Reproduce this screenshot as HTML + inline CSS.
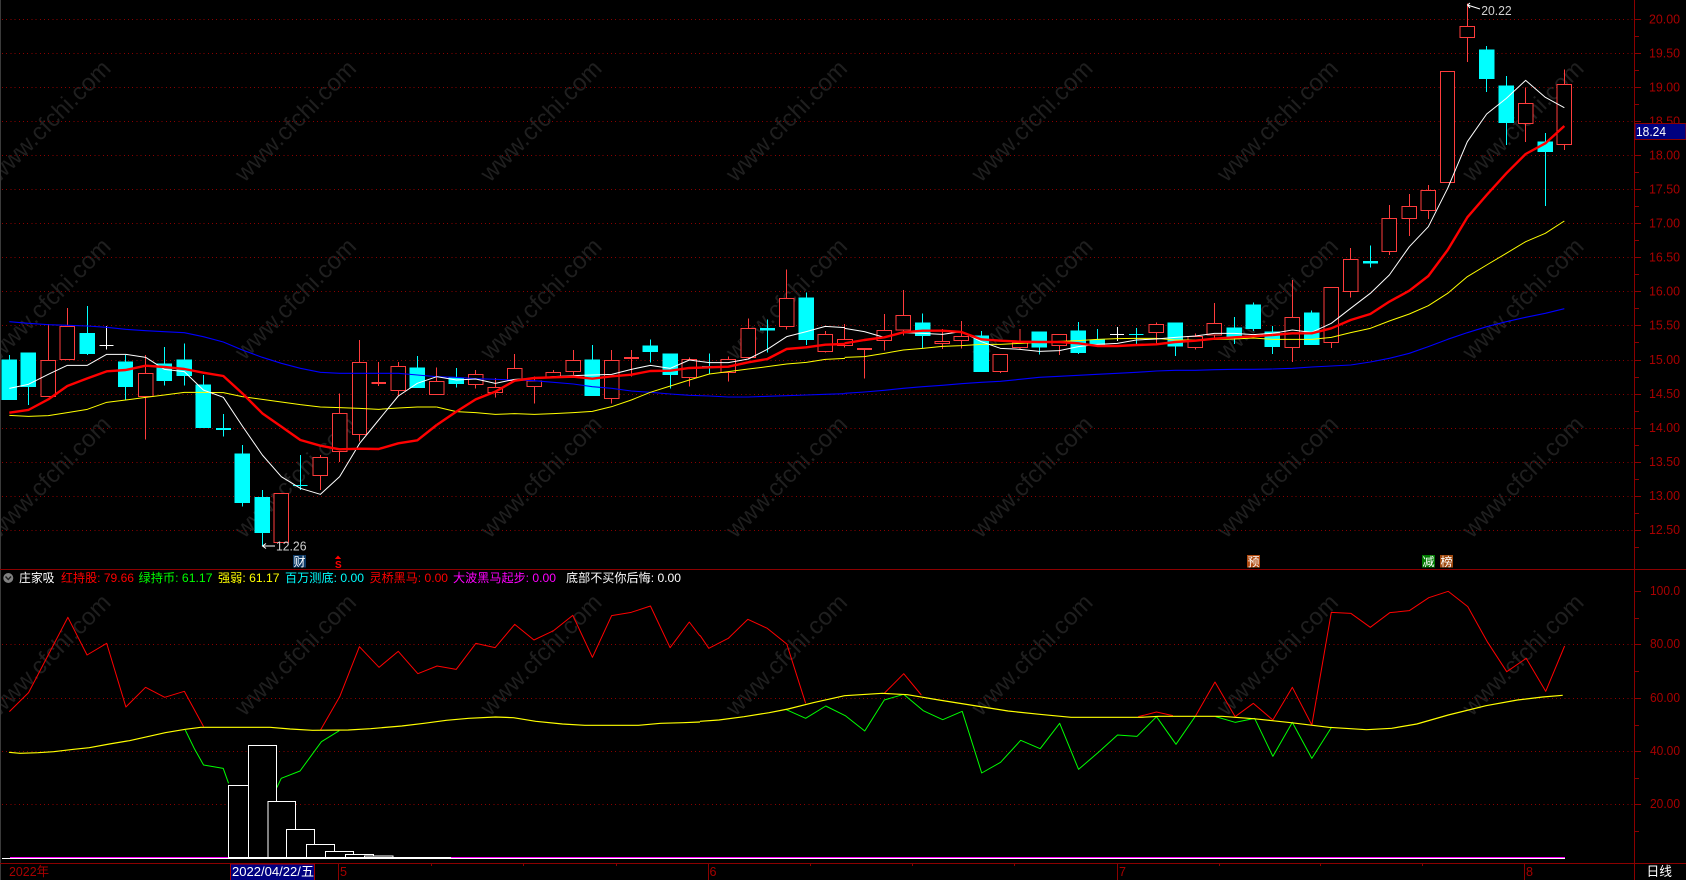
<!DOCTYPE html>
<html>
<head>
<meta charset="utf-8">
<style>
html,body{margin:0;padding:0;background:#000;width:1686px;height:880px;overflow:hidden}
svg{display:block}
text{font-family:"Liberation Sans","Noto Sans CJK SC",sans-serif}
.wm text{font-size:24px;fill:#1f1f1f}
.ax text{font-size:13px;fill:#a80000}
.lg text{font-size:12px}
.nss *{vector-effect:non-scaling-stroke}
.crisp *{shape-rendering:crispEdges}
.r{stroke:#ff3c3c;fill:#000;stroke-width:1}
.c{stroke:#00ffff;fill:#00ffff;stroke-width:1}
.w{stroke:#fff;fill:none;stroke-width:1}
.rf{fill:#ff3c3c}
.cf{fill:#00ffff}
.l{fill:none;stroke-linejoin:round}
</style>
</head>
<body>
<svg width="1686" height="880" viewBox="0 0 1686 880" xmlns="http://www.w3.org/2000/svg">
<rect width="1686" height="880" fill="#000"/>

<g class="wm" transform="translate(7 6)">
<text transform="translate(-8 177) rotate(-45)" textLength="160">www.cfchi.com</text>
<text transform="translate(237.5 177) rotate(-45)" textLength="160">www.cfchi.com</text>
<text transform="translate(483 177) rotate(-45)" textLength="160">www.cfchi.com</text>
<text transform="translate(728.5 177) rotate(-45)" textLength="160">www.cfchi.com</text>
<text transform="translate(974 177) rotate(-45)" textLength="160">www.cfchi.com</text>
<text transform="translate(1219.5 177) rotate(-45)" textLength="160">www.cfchi.com</text>
<text transform="translate(1465 177) rotate(-45)" textLength="160">www.cfchi.com</text>
<text transform="translate(-8 355) rotate(-45)" textLength="160">www.cfchi.com</text>
<text transform="translate(237.5 355) rotate(-45)" textLength="160">www.cfchi.com</text>
<text transform="translate(483 355) rotate(-45)" textLength="160">www.cfchi.com</text>
<text transform="translate(728.5 355) rotate(-45)" textLength="160">www.cfchi.com</text>
<text transform="translate(974 355) rotate(-45)" textLength="160">www.cfchi.com</text>
<text transform="translate(1219.5 355) rotate(-45)" textLength="160">www.cfchi.com</text>
<text transform="translate(1465 355) rotate(-45)" textLength="160">www.cfchi.com</text>
<text transform="translate(-8 533) rotate(-45)" textLength="160">www.cfchi.com</text>
<text transform="translate(237.5 533) rotate(-45)" textLength="160">www.cfchi.com</text>
<text transform="translate(483 533) rotate(-45)" textLength="160">www.cfchi.com</text>
<text transform="translate(728.5 533) rotate(-45)" textLength="160">www.cfchi.com</text>
<text transform="translate(974 533) rotate(-45)" textLength="160">www.cfchi.com</text>
<text transform="translate(1219.5 533) rotate(-45)" textLength="160">www.cfchi.com</text>
<text transform="translate(1465 533) rotate(-45)" textLength="160">www.cfchi.com</text>
<text transform="translate(-8 711) rotate(-45)" textLength="160">www.cfchi.com</text>
<text transform="translate(237.5 711) rotate(-45)" textLength="160">www.cfchi.com</text>
<text transform="translate(483 711) rotate(-45)" textLength="160">www.cfchi.com</text>
<text transform="translate(728.5 711) rotate(-45)" textLength="160">www.cfchi.com</text>
<text transform="translate(974 711) rotate(-45)" textLength="160">www.cfchi.com</text>
<text transform="translate(1219.5 711) rotate(-45)" textLength="160">www.cfchi.com</text>
<text transform="translate(1465 711) rotate(-45)" textLength="160">www.cfchi.com</text>
</g>

<!-- grid -->
<path class="grid" shape-rendering="crispEdges" stroke="#8b0000" stroke-width="1" stroke-dasharray="1 3.2" fill="none"
d="M2 19.5H1635M2 53.5H1635M2 87.5H1635M2 121.5H1635M2 155.5H1635M2 189.5H1635M2 223.5H1635M2 257.5H1635M2 291.5H1635M2 325.5H1635M2 360.5H1635M2 394.5H1635M2 428.5H1635M2 462.5H1635M2 496.5H1635M2 530.5H1635M2 644.5H1635M2 698.5H1635M2 751.5H1635M2 804.5H1635"/>

<!-- frame -->
<g shape-rendering="crispEdges" fill="none">
<path stroke="#3a3a3a" d="M0.5 0V880"/>
<path stroke="#8b0000" d="M1634.5 0V880M0 569.5H1686M0 863.5H1686"/>
<path stroke="#8b0000" d="M1635 19.5H1641M1635 53.5H1641M1635 87.5H1641M1635 121.5H1641M1635 155.5H1641M1635 189.5H1641M1635 223.5H1641M1635 257.5H1641M1635 291.5H1641M1635 325.5H1641M1635 360.5H1641M1635 394.5H1641M1635 428.5H1641M1635 462.5H1641M1635 496.5H1641M1635 530.5H1641
M1635 36.5H1639M1635 70.5H1639M1635 104.5H1639M1635 138.5H1639M1635 172.5H1639M1635 206.5H1639M1635 240.5H1639M1635 274.5H1639M1635 308.5H1639M1635 342.5H1639M1635 377.5H1639M1635 411.5H1639M1635 445.5H1639M1635 479.5H1639M1635 513.5H1639M1635 547.5H1639
M1635 591.5H1641M1635 644.5H1641M1635 698.5H1641M1635 751.5H1641M1635 804.5H1641M1635 618.5H1639M1635 671.5H1639M1635 725.5H1639M1635 778.5H1639M1635 831.5H1639"/>
<path stroke="#8b0000" d="M338.5 863V880M708.5 863V880M1117.5 863V880M1524.5 863V880M431.5 863V866M523.5 863V866M616.5 863V866M810.5 863V866M912.5 863V866M1014.5 863V866M1219.5 863V866M1320.5 863V866M1422.5 863V866"/>
</g>

<!-- axis labels -->
<g class="ax" transform="translate(0 -1)">
<text x="1649" y="24.5" textLength="31" lengthAdjust="spacingAndGlyphs">20.00</text>
<text x="1649" y="58.5" textLength="31" lengthAdjust="spacingAndGlyphs">19.50</text>
<text x="1649" y="92.5" textLength="31" lengthAdjust="spacingAndGlyphs">19.00</text>
<text x="1649" y="126.5" textLength="31" lengthAdjust="spacingAndGlyphs">18.50</text>
<text x="1649" y="160.5" textLength="31" lengthAdjust="spacingAndGlyphs">18.00</text>
<text x="1649" y="194.5" textLength="31" lengthAdjust="spacingAndGlyphs">17.50</text>
<text x="1649" y="228.5" textLength="31" lengthAdjust="spacingAndGlyphs">17.00</text>
<text x="1649" y="262.5" textLength="31" lengthAdjust="spacingAndGlyphs">16.50</text>
<text x="1649" y="296.5" textLength="31" lengthAdjust="spacingAndGlyphs">16.00</text>
<text x="1649" y="330.5" textLength="31" lengthAdjust="spacingAndGlyphs">15.50</text>
<text x="1649" y="365" textLength="31" lengthAdjust="spacingAndGlyphs">15.00</text>
<text x="1649" y="399" textLength="31" lengthAdjust="spacingAndGlyphs">14.50</text>
<text x="1649" y="433" textLength="31" lengthAdjust="spacingAndGlyphs">14.00</text>
<text x="1649" y="467" textLength="31" lengthAdjust="spacingAndGlyphs">13.50</text>
<text x="1649" y="501" textLength="31" lengthAdjust="spacingAndGlyphs">13.00</text>
<text x="1649" y="535" textLength="31" lengthAdjust="spacingAndGlyphs">12.50</text>
<text x="1650" y="596" textLength="30" lengthAdjust="spacingAndGlyphs">100.0</text>
<text x="1650" y="649" textLength="30" lengthAdjust="spacingAndGlyphs">80.00</text>
<text x="1650" y="703" textLength="30" lengthAdjust="spacingAndGlyphs">60.00</text>
<text x="1650" y="756" textLength="30" lengthAdjust="spacingAndGlyphs">40.00</text>
<text x="1650" y="809" textLength="30" lengthAdjust="spacingAndGlyphs">20.00</text>
</g>
<g class="ax">
<text x="9" y="876" textLength="40" lengthAdjust="spacingAndGlyphs">2022年</text>
<text x="340" y="876" textLength="7" lengthAdjust="spacingAndGlyphs">5</text>
<text x="709.5" y="876" textLength="7" lengthAdjust="spacingAndGlyphs">6</text>
<text x="1119" y="876" textLength="7" lengthAdjust="spacingAndGlyphs">7</text>
<text x="1526" y="876" textLength="7" lengthAdjust="spacingAndGlyphs">8</text>
</g>
<text x="1646.5" y="876" font-size="13" fill="#fff" textLength="25.5" lengthAdjust="spacingAndGlyphs">日线</text>

<!-- price box -->
<rect x="1635" y="123.5" width="51" height="16" fill="#000080" stroke="#8b0000" stroke-width="1" shape-rendering="crispEdges"/>
<text x="1636" y="136" font-size="13" fill="#fff" textLength="30" lengthAdjust="spacingAndGlyphs">18.24</text>

<!-- date box -->
<rect x="230.5" y="864" width="84" height="17" fill="#000080" stroke="#a00000" stroke-width="1" shape-rendering="crispEdges"/>
<text x="232" y="876" font-size="13" fill="#fff" textLength="82" lengthAdjust="spacingAndGlyphs">2022/04/22/五</text>

<!-- candles A -->
<g class="nss crisp" transform="translate(0 280) scale(.33333)">
<path class="r" d="M145 132V241M123 241H167V350H123ZM202 84V139M180 139H224V239H180ZM437 225V280M437 350V479M415 280H459V350H415ZM822 640H866V788H822ZM961 525V532M961 586V630M939 532H983V586H939ZM1019 340V400M1019 514V546M997 400H1041V514H997ZM1079 180V247M1079 463V485M1057 247H1100V463H1057ZM1136 246V318M1195 246V259M1195 331V347M1173 259H1217V331H1173Z"/>
<rect class="rf" x="1114" y="306" width="44" height="6"/>
<path class="c" d="M28 225V240M6 240H50V359H6ZM85 320V375M63 219H107V320H63ZM262 78V160M262 221V225M240 160H284V221H240ZM377 225V246M377 320V360M355 246H398V320H355ZM493 201V252M493 302V317M471 252H515V302H471ZM553 190V240M553 287V317M531 240H575V287H531ZM610 285V315M588 315H632V443H588ZM670 402V470M727 495V522M727 668V680M705 522H749V668H705ZM787 630V652M787 758V798M765 652H809V758H765ZM901 525V630M879 616H923M1252 228V264M1230 264H1274V323H1230Z"/>
<rect class="cf" x="648" y="444" width="45" height="6"/>
<path class="w" d="M320 138V208M298 196H340"/>
</g>
<!-- candles B -->
<g class="nss crisp" transform="translate(420 260) scale(.33333)">
<path class="r" d="M50 322V364M28 364H72V403H28ZM167 330V343M167 374V386M145 343H189V374H145ZM226 354V382M226 398V413M204 382H248V398H204ZM284 282V325M262 325H306V361H262ZM343 349V363M343 380V431M321 363H365V380H321ZM400 330V337M378 337H422V351H378ZM460 270V301M460 335V345M438 301H482V335H438ZM575 270V301M575 415V431M553 301H597V415H553ZM634 270V350M808 292V298M808 352V380M786 298H830V352H786ZM925 290V298M925 338V365M903 298H947V338H903ZM985 175V205M985 293V297M963 205H1007V293H963ZM1100 28V115M1100 199V209M1078 115H1122V199H1078ZM1216 213V223M1216 274V278M1194 223H1238V274H1194Z"/>
<rect class="rf" x="612" y="291" width="45" height="6"/>
<path class="c" d="M109 324V354M109 371V383M87 354H131V371H87ZM517 255V300M495 300H539V407H495ZM691 238V258M691 275V308M669 258H713V275H669ZM751 344V386M729 282H773V344H729ZM868 280V342M846 320H890M1042 178V278M1159 97V114M1159 239V255M1137 114H1181V239H1137Z"/>
<rect class="cf" x="1020" y="204" width="45" height="8"/>
</g>
<!-- candles C -->
<g class="nss crisp" transform="translate(840 260) scale(.33333)">
<path class="r" d="M14 192V238M14 256V263M-8 238H38V256H-8ZM73 267V356M133 162V211M133 241V272M111 211H155V241H111ZM190 90V166M190 210V226M168 166H212V210H168ZM307 207V244M307 251V267M285 244H329V251H285ZM364 183V229M364 241V266M342 229H386V241H342ZM481 335V339M459 283H503V335H459ZM540 207V248M540 263V268M518 248H562V263H518ZM658 222V223M658 257V285M636 223H680V257H636ZM949 188V193M949 218V252M927 193H971V218H927ZM1066 220V229M1066 263V269M1044 229H1088V263H1044ZM1123 129V190M1123 225V234M1101 190H1145V225H1101Z"/>
<rect class="rf" x="51" y="264" width="45" height="6"/>
<path class="c" d="M248 160V189M248 227V265M226 189H270V227H226ZM424 213V228M402 228H446V335H402ZM598 261V284M576 216H620V261H576ZM715 186V213M715 278V282M693 213H737V278H693ZM772 207V240M772 253V255M750 240H794V253H750ZM889 204V253M867 223H911M1006 258V288M984 189H1028V258H984ZM1183 171V204M1183 231V252M1161 204H1205V231H1161ZM1240 127V135M1240 205V213M1218 135H1262V205H1218Z"/>
<path class="w" d="M832 201V243M810 223H852"/>
</g>
<!-- candles D -->
<g class="nss crisp" transform="translate(1260 0) scale(.33333)">
<path class="r" d="M97 840V952M97 1043V1086M75 952H119V1043H75ZM214 1027V1044M192 862H236V1027H192ZM272 744V778M272 874V893M250 778H294V874H250ZM388 615V655M388 754V765M366 655H410V754H366ZM448 582V619M448 655V708M426 619H470V655H426ZM505 555V571M505 631V657M483 571H527V631H483ZM541 214H584V547H541ZM622 10V79M622 112V186M600 79H644V112H600ZM797 263V310M797 370V426M775 310H819V370H775ZM913 209V253M913 433V450M891 253H935V433H891Z"/>
<path class="c" d="M37 978V996M37 1040V1062M15 996H59V1040H15ZM155 932V939M133 939H177V1034H133ZM331 736V803M680 138V150M680 236V276M658 150H702V236H658ZM739 228V258M739 368V435M717 258H761V368H717ZM856 399V426M856 455V618M834 426H878V455H834Z"/>
<rect class="cf" x="309" y="783" width="45" height="8"/>
</g>

<!-- MA lines A -->
<g class="nss" transform="translate(0 280) scale(.33333)">
<polyline class="l" stroke="#0000ff" stroke-width="1.1" points="28,125 85,130 145,134 202,136 262,138 320,142 377,148 437,152 493,155 553,158 610,170 670,186 727,210 787,232 844,250 901,265 961,277 1019,280 1079,280 1136,280 1195,280 1252,285 1310,290"/>
<polyline class="l" stroke="#ffff00" stroke-width="1" points="28,406 85,409 145,407 202,398 262,388 320,367 377,360 437,352 493,345 553,337 610,337 670,338 727,350 787,358 844,366 901,374 961,381 1019,383 1079,385 1136,388 1195,384 1252,381 1310,381"/>
<polyline class="l" stroke="#ffffff" stroke-width="1" points="28,325 85,313 145,283 202,256 262,256 320,223 377,223 437,232 493,268 553,275 610,330 670,352 727,438 787,525 844,590 901,625 961,643 1019,590 1079,490 1136,420 1195,348 1252,310 1310,290"/>
<polyline class="l" stroke="#ff0000" stroke-width="2.4" points="28,398 85,390 145,358 202,318 262,295 320,274 377,270 437,257 493,261 553,267 610,278 670,288 727,340 787,400 844,440 901,480 961,497 1019,508 1079,506 1136,507 1195,490 1252,481 1310,435"/>
</g>
<!-- MA lines B -->
<g class="nss" transform="translate(420 260) scale(.33333)">
<polyline class="l" stroke="#0000ff" stroke-width="1.1" points="50,350 109,352 167,356 226,358 284,360 343,362 400,367 460,372 517,380 575,385 634,393 691,397 751,402 808,406 868,408 925,411 985,411 1042,409 1100,407 1159,405 1216,403 1275,401"/>
<polyline class="l" stroke="#ffff00" stroke-width="1" points="50,441 109,455 167,458 226,463 284,461 343,463 400,461 460,458 517,454 575,440 634,420 691,397 751,378 808,360 868,342 925,335 985,327 1042,320 1100,312 1159,307 1216,298 1275,295"/>
<polyline class="l" stroke="#ffffff" stroke-width="1" points="50,350 109,360 167,357 226,370 284,358 343,355 400,350 460,347 517,345 575,343 634,328 691,316 751,325 808,300 868,308 925,308 985,297 1042,268 1100,230 1159,215 1216,199 1275,203"/>
<polyline class="l" stroke="#ff0000" stroke-width="2.4" points="50,495 109,455 167,418 226,395 284,362 343,354 400,352 460,350 517,356 575,349 634,344 691,333 751,332 808,324 868,322 925,320 985,307 1042,297 1100,267 1159,262 1216,254 1275,252"/>
</g>
<!-- MA lines C -->
<g class="nss" transform="translate(840 260) scale(.33333)">
<polyline class="l" stroke="#0000ff" stroke-width="1.1" points="14,400 73,396 133,391 190,385 248,380 307,376 364,371 424,367 481,364 540,358 598,352 658,349 715,346 772,343 832,340 889,337 949,333 1006,331 1066,331 1123,329 1183,328 1240,328 1297,327"/>
<polyline class="l" stroke="#ffff00" stroke-width="1" points="14,292 73,290 133,280 190,270 248,265 307,259 364,257 424,253 481,253 540,250 598,247 658,244 715,242 772,238 832,236 889,235 949,235 1006,240 1066,240 1123,238 1183,237 1240,234 1297,238"/>
<polyline class="l" stroke="#ffffff" stroke-width="1" points="14,205 73,215 133,232 190,218 248,220 307,223 364,215 424,245 481,265 540,268 598,274 658,272 715,260 772,253 832,250 889,240 949,237 1006,232 1066,228 1123,220 1183,220 1240,224 1297,220"/>
<polyline class="l" stroke="#ff0000" stroke-width="2.4" points="14,250 73,240 133,232 190,217 248,212 307,212 364,216 424,238 481,242 540,245 598,246 658,246 715,250 772,258 832,258 889,255 949,253 1006,246 1066,242 1123,236 1183,232 1240,229 1297,225"/>
</g>
<!-- MA lines D -->
<g class="nss" transform="translate(1260 0) scale(.33333)">
<polyline class="l" stroke="#0000ff" stroke-width="1.1" points="37,1107 97,1105 155,1101 214,1098 272,1095 331,1086 388,1075 448,1060 505,1040 563,1018 622,998 680,980 739,965 797,952 856,940 913,926"/>
<polyline class="l" stroke="#ffff00" stroke-width="1" points="37,1018 97,1018 155,1018 214,1012 272,998 331,985 388,963 448,942 505,917 563,880 622,830 680,795 739,760 797,725 856,700 913,663"/>
<polyline class="l" stroke="#ffffff" stroke-width="1" points="37,1000 97,990 155,997 214,970 272,925 331,880 388,825 448,740 505,680 563,565 622,425 680,342 739,295 797,241 856,292 913,323"/>
<polyline class="l" stroke="#ff0000" stroke-width="2.4" points="37,1005 97,1000 155,1000 214,985 272,960 331,942 388,905 448,872 505,828 563,750 622,652 680,585 739,520 797,462 856,430 913,378"/>
</g>

<!-- markers -->
<text x="276" y="550.5" font-size="13" fill="#d0d0d0" textLength="30.5" lengthAdjust="spacingAndGlyphs">12.26</text>
<path d="M275 546H262.5M266 543.5L262.5 546L266 548.5" stroke="#fff" fill="none"/>
<text x="1481.2" y="15" font-size="13" fill="#d0d0d0" textLength="30.5" lengthAdjust="spacingAndGlyphs">20.22</text>
<path d="M1480 9L1467.5 5M1470 3L1467.5 5L1470 8" stroke="#fff" fill="none"/>
<rect x="293" y="555" width="13" height="12.5" fill="#0d3a66"/>
<text x="293.5" y="566" font-size="12" fill="#fff">财</text>
<polygon points="338,555.5 334.8,559 341.2,559" fill="#f00"/>
<text x="335" y="568" font-size="10" font-weight="bold" fill="#f00">S</text>
<rect x="1247" y="555" width="13" height="12.5" fill="#b04a10"/>
<text x="1247.5" y="566" font-size="12" fill="#fff">预</text>
<rect x="1422" y="555" width="13" height="12.5" fill="#007a00"/>
<text x="1422.5" y="566" font-size="12" fill="#fff">减</text>
<rect x="1440" y="555" width="13" height="12.5" fill="#a04a10"/>
<text x="1440.5" y="566" font-size="12" fill="#fff">榜</text>

<!-- legend -->
<circle cx="8.3" cy="578" r="5" fill="#808080"/>
<path d="M5.5 576.5L8.3 579.5L11 576.5" stroke="#1c1c1c" stroke-width="1.4" fill="none"/>
<g class="lg">
<text x="19" y="582" fill="#fff" textLength="35.5" lengthAdjust="spacingAndGlyphs">庄家吸</text>
<text x="61" y="582" fill="#ff0000" textLength="73" lengthAdjust="spacingAndGlyphs">红持股: 79.66</text>
<text x="138.5" y="582" fill="#00ff00" textLength="74" lengthAdjust="spacingAndGlyphs">绿持币: 61.17</text>
<text x="218" y="582" fill="#ffff00" textLength="61.5" lengthAdjust="spacingAndGlyphs">强弱: 61.17</text>
<text x="285" y="582" fill="#00ffff" textLength="79" lengthAdjust="spacingAndGlyphs">百万测底: 0.00</text>
<text x="369.5" y="582" fill="#ff0000" textLength="78.5" lengthAdjust="spacingAndGlyphs">灵桥黑马: 0.00</text>
<text x="453" y="582" fill="#ff00ff" textLength="103" lengthAdjust="spacingAndGlyphs">大波黑马起步: 0.00</text>
<text x="566" y="582" fill="#ffffff" textLength="115" lengthAdjust="spacingAndGlyphs">底部不买你后悔: 0.00</text>
</g>

<!-- lower pane: base lines -->
<g shape-rendering="crispEdges">
<path stroke="#ff00ff" d="M10 857.5H1565"/>
<path stroke="#ffffff" d="M2 858.5H1565M228 857.5H451"/>
</g>

<!-- lower pane left -->
<g class="nss" transform="translate(0 560) scale(.44643 .33333)">
<polyline class="l" stroke="#ff0000" stroke-width="1" points="21,455 64,398 108,285 152,172 195,285 239,250 282,441 326,382 369,412 413,394 456,500"/>
<polyline class="l" stroke="#ff0000" stroke-width="1" points="718,510 761,410 805,260 849,322 892,274 936,341 979,318 1022,328 1066,250 1109,263 1153,193 1196,240 1240,212 1283,166 1327,292 1370,167 1414,157 1457,138 1501,263 1544,186 1568,228"/>
<polyline class="l" stroke="#00ff00" stroke-width="1" points="415,510 435,565 456,615 500,625 512,670"/>
<polyline class="l" stroke="#00ff00" stroke-width="1" points="620,683 630,655 672,633 720,545 760,512"/>
<g class="crisp">
<rect x="512" y="677" width="62" height="216" fill="#000" stroke="#fff" stroke-width="1"/>
<rect x="557" y="556" width="62" height="337" fill="#000" stroke="#fff" stroke-width="1"/>
<rect x="600" y="724" width="62" height="169" fill="#000" stroke="#fff" stroke-width="1"/>
<rect x="642" y="808" width="63" height="85" fill="#000" stroke="#fff" stroke-width="1"/>
<rect x="686" y="853" width="63" height="40" fill="#000" stroke="#fff" stroke-width="1"/>
<rect x="729" y="874" width="63" height="19" fill="#000" stroke="#fff" stroke-width="1"/>
<rect x="774" y="883" width="63" height="10" fill="#000" stroke="#fff" stroke-width="1"/>
<rect x="816" y="888" width="64" height="5" fill="#000" stroke="#fff" stroke-width="1"/>
</g>
<polyline class="l" stroke="#ffff00" stroke-width="1.2" points="20,577 45,580 85,578 120,575 165,568 200,563 245,552 290,542 330,530 370,518 415,508 450,502 520,502 605,502 650,507 700,511 780,510 830,506 900,498 950,490 1000,481 1050,475 1110,471 1150,473 1200,484 1260,492 1310,496 1430,496 1480,490 1530,488 1568,486"/>
</g>

<!-- lower pane right -->
<g class="nss" transform="translate(700 560) scale(.6288 .33333)">
<polyline class="l" stroke="#ff0000" stroke-width="1" points="0,226 14,265 45,235 76,178 107,205 138,252 168,430"/>
<polyline class="l" stroke="#ff0000" stroke-width="1" points="293,400 324,341 352,405"/>
<polyline class="l" stroke="#ff0000" stroke-width="1" points="697,470 726,456 752,467"/>
<polyline class="l" stroke="#ff0000" stroke-width="1" points="788,468 819,366 851,470 880,430 911,480 942,382 973,495 1004,157 1035,160 1066,202 1097,158 1128,152 1159,113 1190,94 1221,140 1252,245 1283,335 1314,295 1345,394 1375,258"/>
<polyline class="l" stroke="#00ff00" stroke-width="1" points="136,448 168,475 200,438 231,467 262,513 293,420 324,403 355,452 386,479 417,454 448,639 478,607 510,541 541,566 572,490 602,628 633,578 664,525 695,529 726,470 757,553 788,468"/>
<polyline class="l" stroke="#00ff00" stroke-width="1" points="820,470 851,487 882,475 911,589 942,487 973,595 1004,503"/>
<polyline class="l" stroke="#ffff00" stroke-width="1.2" points="0,484 30,480 70,470 110,458 140,447 180,428 230,407 290,400 330,404 380,420 440,438 490,453 540,463 590,472 700,472 730,469 830,469 880,476 940,488 1000,502 1060,509 1100,505 1140,492 1190,465 1250,437 1300,420 1340,411 1372,406"/>
</g>
</svg>
</body>
</html>
